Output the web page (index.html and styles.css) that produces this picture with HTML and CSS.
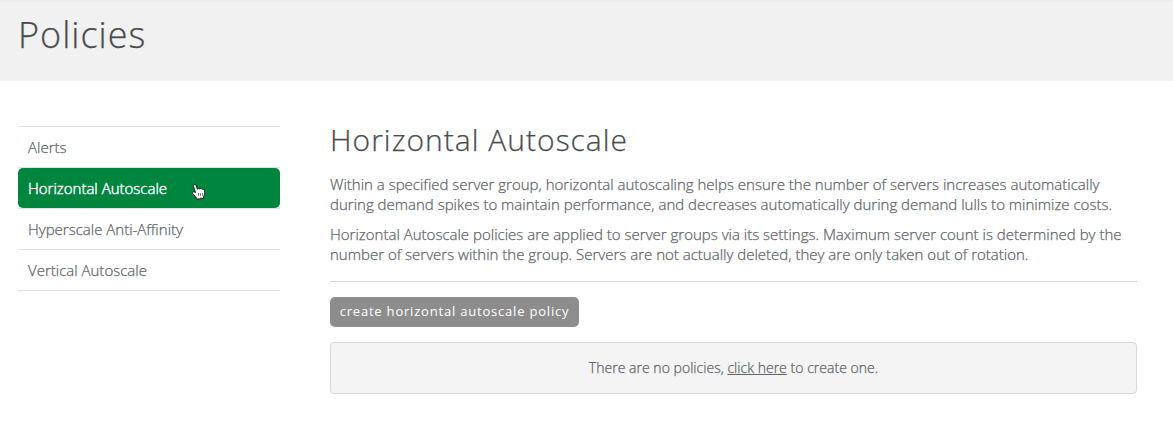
FILE: index.html
```html
<!DOCTYPE html>
<html lang="en">
<head>
<meta charset="utf-8">
<title>Policies</title>
<link rel="stylesheet" href="styles.css">
</head>
<body>
<header class="page-header"><h1>Policies</h1></header>
<div class="layout">
  <nav class="sidebar">
    <a class="item"><span>Alerts</span></a>
    <a class="item active"><span>Horizontal Autoscale</span>
      <svg class="cursor" width="15" height="18" viewBox="0 0 15 18"><path d="M4.500 9.500L2.500 3.500C1.900 1.300 4.300 .6 5.100 2.700L6.400 6.200C7.200 5.200 8.200 5.300 8.900 6.100C9.800 5.200 10.900 5.500 11.300 6.300C12.400 5.800 13.300 6.600 13.400 7.600C13.800 10 13.700 12 12.500 13.800V15.500H10.800L9.800 14.800L8.800 16H6.200C5 13.800 3.300 12.300 1.700 10.700C.6 9.400 2.200 8.100 4.500 9.500Z" fill="#fff" stroke="#111" stroke-width=".9"/><path d="M7.500 10v3M9.500 10v3M11.500 10v3" stroke="#333" stroke-width=".6"/></svg></a>
    <a class="item"><span>Hyperscale Anti-Affinity</span></a>
    <a class="item"><span>Vertical Autoscale</span></a>
  </nav>
  <main class="content">
    <h2>Horizontal Autoscale</h2>
    <p>Within a specified server group, horizontal autoscaling helps ensure the number of servers increases automatically<br>during demand spikes to maintain performance, and decreases automatically during demand lulls to minimize costs.</p>
    <p>Horizontal Autoscale policies are applied to server groups via its settings. Maximum server count is determined by the<br>number of servers within the group. Servers are not actually deleted, they are only taken out of rotation.</p>
    <hr>
    <button class="create">create horizontal autoscale policy</button>
    <div class="empty"><span>There are no policies, <a class="link">click here</a> to create one.</span></div>
  </main>
</div>
</body>
</html>
```
FILE: styles.css
```css
* { box-sizing: border-box; }
body { margin: 0; background: #fff; color: #606468; font-family: "Open Sans", sans-serif; font-weight: 300; font-size: 15px; line-height: 20px; -webkit-text-stroke: .25px currentColor; }
.page-header { height: 81px; background: linear-gradient(#ebebeb, #f1f1f1 3px); padding: 10px 18px; }
h1 { margin: 0; font-size: 36px; line-height: 50px; font-weight: 300; letter-spacing: 1px; color: #4a4c4e; }
.layout { display: flex; gap: 50px; padding: 45px 36px 0 18px; }
.sidebar { width: 262px; flex: none; border-bottom: 1px solid #e2e2e2; align-self: flex-start; }
.item { display: flex; align-items: center; position: relative; height: 41px; padding: 0 10px; border-top: 1px solid #e2e2e2; }
.active { background: #00853f; color: #fff; border-radius: 5px; border-top: 0; height: 40px; margin-top: 1px; -webkit-text-stroke-width: .45px; }
.active::before { content: ""; position: absolute; z-index: -1; left: 0; right: 0; top: -1px; height: 1px; background: #e2e2e2; }
.cursor { position: absolute; left: 173px; top: 15px; }
.content { flex: 1; min-width: 0; white-space: nowrap; }
h2 { margin: -8px 0 12px; font-size: 30px; line-height: 44px; font-weight: 300; letter-spacing: 1px; color: #4a4c4e; }
p { margin: 0 0 10px; letter-spacing: .005px; }
hr { border: 0; border-top: 1px solid #d9d9d9; margin: 17px 0 15px; }
.create { display: block; width: 249px; height: 30px; border: 0; border-radius: 5px; background: #8d8d8d; color: #fff; font: 400 13px "Open Sans", sans-serif; letter-spacing: .8px; padding: 0 0 2px; -webkit-text-stroke-width: 0; }
.empty { margin-top: 15px; height: 52px; background: #f4f4f4; border: 1px solid #d9d9d9; border-radius: 4px; display: flex; align-items: center; justify-content: center; font-size: 14px; letter-spacing: .03px; }
.link { text-decoration: underline; }
```
